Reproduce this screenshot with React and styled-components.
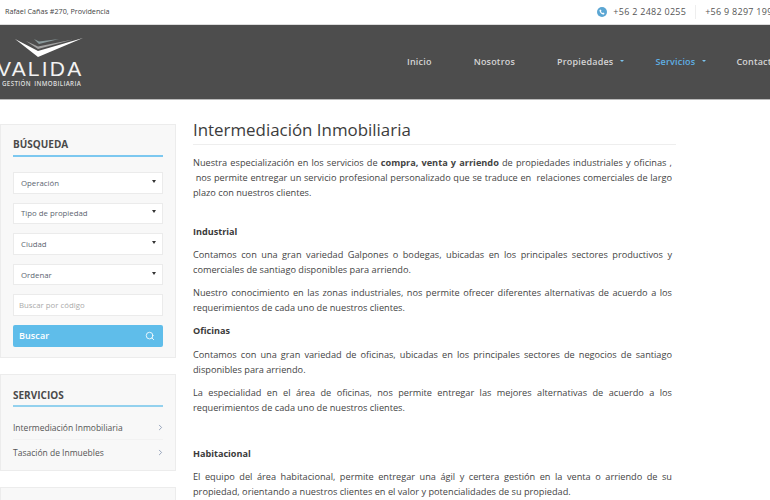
import React from "react";
import styled, { createGlobalStyle } from "styled-components";
import { Search, ChevronRight } from "lucide-react";

const Global = createGlobalStyle`
  html, body { margin: 0; padding: 0; background: #fff; overflow: hidden; height: 500px; }
  body { font-family: "Open Sans", "Liberation Sans", sans-serif; color: #444; }
  * { box-sizing: border-box; }
`;
const Page = styled.div`width: 770px; height: 500px; overflow: hidden;`;
const TopBar = styled.div`
  height: 24px; display: flex; align-items: center;
  white-space: nowrap; color: #444; padding-left: 5px;
`;
const Address = styled.span`font-size: 7.2px; margin-top: -2px;`;
const Phones = styled.div`display: flex; align-items: center; margin-left: auto; margin-right: -8px; font-size: 9px; letter-spacing: .27px; color: #555;`;
const PhoneDot = styled.span`
  width: 10px; height: 10px; border-radius: 50%; background: #5ba6d3; margin-right: 6px; display: flex; align-items: center; justify-content: center;
`;
const Phone = styled.span`
  padding-right: ${p => (p.$first ? "9px" : "0")};
  margin-right: ${p => (p.$first ? "9px" : "0")};
  border-right: ${p => (p.$first ? "1px solid #eee" : "none")};
  line-height: 14px;
`;
const Header = styled.header`
  height: 76px; background: #4d4d4d; border-top: 1px solid #ddd; border-bottom: 1px solid #bbb;
  display: flex; align-items: center; overflow: hidden; white-space: nowrap;
`;
const Logo = styled.div`
  width: 84px; margin-left: -2px; display: flex; flex-direction: column; align-items: flex-start; color: #fff; flex: none;
`;
const LogoMark = styled.svg`width: 71px; height: 21px; margin-left: 15px; margin-bottom: 2px; display: block;`;
const LogoName = styled.div`font-family: "Liberation Sans", sans-serif; font-size: 21px; line-height: 19px; letter-spacing: 2.2px; margin-left: -1px; font-weight: 400; color: #f2f2f2;`;
const LogoSub = styled.div`font-size: 6.2px; line-height: 9px; letter-spacing: .35px; margin-left: 4px; margin-top: 1px; font-weight: 600; color: #ddd; word-spacing: 1.5px;`;
const Nav = styled.nav`display: flex; align-items: center; margin-left: 325px; margin-top: -2px; font-size: 9px; font-weight: 600; color: #d4d4d4; letter-spacing: .2px;`;
const NavItem = styled.span`
  display: flex; align-items: center; margin-left: ${p => p.$gap}px; color: ${p => (p.$active ? "#5fb0e4" : "#d4d4d4")};
`;
const Caret = styled.i`
  display: inline-block; margin-left: 7px; width: 0; height: 0; border-left: 2px solid transparent; border-right: 2px solid transparent; border-top: 2px solid #7cc4ee;
`;
const Body = styled.div`display: flex; align-items: flex-start; padding-top: 24px;`;
const Sidebar = styled.aside`width: 176px; flex: none; display: flex; flex-direction: column; gap: 16px;`;
const Panel = styled.section`
  background: #f8f8f8; border: 1px solid #ececec; padding: 12px 12px 0; height: ${p => p.$h}px; width: 176px;
`;
const PanelTitle = styled.h3`
  margin: ${p => (p.$thick ? "1px" : "0")} 0 0; font-size: 10px; line-height: 14px; font-weight: 700; color: #4a4a4a; padding-bottom: ${p => (p.$thick ? "3px" : "4px")};
  border-bottom: 2px solid ${p => (p.$thick ? "#93d1ee" : "#7cc8f0")};
`;
const Fields = styled.div`display: flex; flex-direction: column; gap: 9px; margin-top: 15px;`;
const Field = styled.div`
  height: 21.6px; background: #fff; border: 1px solid #ebebeb; display: flex; align-items: center; justify-content: space-between;
  padding: 0 6px 0 ${p => (p.$placeholder ? "5px" : "7px")}; font-size: 7.8px; color: ${p => (p.$placeholder ? "#aaa" : "#5c6470")};
`;
const FieldCaret = styled.i`
  width: 0; height: 0; border-left: 2.5px solid transparent; border-right: 2.5px solid transparent; border-top: 3px solid #333; margin-top: -3px;
`;
const SearchBtn = styled.div`
  height: 22px; border-radius: 2px; background: #5fbdea; color: #fff; display: flex; align-items: center; justify-content: space-between;
  padding: 0 8px 0 6px; font-size: 9px; font-weight: 600; letter-spacing: .1px;
`;
const ServiceList = styled.ul`list-style: none; margin: 8px 0 0; padding: 0;`;
const ServiceItem = styled.li`
  height: 25px; display: flex; align-items: center; justify-content: space-between; font-size: 8.5px; color: #555;
  border-bottom: ${p => (p.$last ? "none" : "1px solid #f2f2f2")};
  svg { margin-right: -2px; }
`;
const Main = styled.main`width: 483px; margin-left: 17px; margin-top: -4px; flex: none; color: #444;`;
const Title = styled.h1`
  margin: 0; font-size: 16.9px; line-height: 20px; font-weight: 400; color: #3c3c3c; padding: 0 0 4px 0; border-bottom: 1px solid #eee;
`;
const Para = styled.p`
  margin: ${p => p.$top ?? 0}px 0 0; width: 479px; text-align: justify; font-size: 9.2px; line-height: 15px;
`;
const Line = styled.span`display: block; text-align: justify; text-align-last: ${p => (p.$end ? "left" : "justify")};`;
const Sub = styled.h4`margin: ${p => p.$top}px 0 0; font-size: 9.1px; line-height: 15px; font-weight: 700; color: #3a3a3a;`;

export default function App() {
  return (
    <Page>
      <Global />
      <TopBar>
        <Address>Rafael Cañas #270, Providencia</Address>
        <Phones>
          <PhoneDot>
            <svg width="6" height="6" viewBox="0 0 24 24" fill="#fff"><path d="M6 2l4 5-2 3c1 3 3 5 6 6l3-2 5 4-2 4c-9 1-19-9-18-18z" /></svg>
          </PhoneDot>
          <Phone $first>+56 2 2482 0255</Phone>
          <Phone>+56 9 8297 1999</Phone>
        </Phones>
      </TopBar>
      <Header>
        <Logo>
          <LogoMark viewBox="0 0 71 21">
            <path d="M2 3 L25 21 L70 2 L25 15 Z" fill="#fff" />
            <path d="M13 5 L25 13 L60 3.5 L25 10.5 Z" fill="#a4a4a4" />
            <path d="M21 3 L26 8 L46 3 L26 5.5 Z" fill="#8a9a9c" />
          </LogoMark>
          <LogoName>VALIDA</LogoName>
          <LogoSub>GESTIÓN INMOBILIARIA</LogoSub>
        </Logo>
        <Nav>
          <NavItem $gap={0}>Inicio</NavItem>
          <NavItem $gap={42}>Nosotros</NavItem>
          <NavItem $gap={42}>Propiedades<Caret /></NavItem>
          <NavItem $gap={31} $active>Servicios<Caret /></NavItem>
          <NavItem $gap={30}>Contacto</NavItem>
        </Nav>
      </Header>
      <Body>
        <Sidebar>
          <Panel $h={234}>
            <PanelTitle>BÚSQUEDA</PanelTitle>
            <Fields>
              <Field>Operación<FieldCaret /></Field>
              <Field>Tipo de propiedad<FieldCaret /></Field>
              <Field>Ciudad<FieldCaret /></Field>
              <Field>Ordenar<FieldCaret /></Field>
              <Field $placeholder>Buscar por código</Field>
              <SearchBtn>Buscar<Search size={10} strokeWidth={2} /></SearchBtn>
            </Fields>
          </Panel>
          <Panel $h={97}>
            <PanelTitle $thick>SERVICIOS</PanelTitle>
            <ServiceList>
              <ServiceItem>Intermediación Inmobiliaria<ChevronRight size={9} color="#7a8aa8" /></ServiceItem>
              <ServiceItem $last>Tasación de Inmuebles<ChevronRight size={9} color="#7a8aa8" /></ServiceItem>
            </ServiceList>
          </Panel>
          <Panel $h={40} />
        </Sidebar>
        <Main>
          <Title>Intermediación Inmobiliaria</Title>
          <Para $top={10}>
            <Line>Nuestra especialización en los servicios de <b>compra, venta y arriendo</b> de propiedades industriales y oficinas ,</Line>
            <Line>&nbsp;nos permite entregar un servicio profesional personalizado que se traduce en &nbsp;relaciones comerciales de largo</Line>
            <Line $end>plazo con nuestros clientes.</Line>
          </Para>
          <Sub $top={24}>Industrial</Sub>
          <Para $top={8}>
            <Line>Contamos con una gran variedad Galpones o bodegas, ubicadas en los principales sectores productivos y</Line>
            <Line $end>comerciales de santiago disponibles para arriendo.</Line>
          </Para>
          <Para $top={8}>
            <Line>Nuestro conocimiento en las zonas industriales, nos permite ofrecer diferentes alternativas de acuerdo a los</Line>
            <Line $end>requerimientos de cada uno de nuestros clientes.</Line>
          </Para>
          <Sub $top={8}>Oficinas</Sub>
          <Para $top={9}>
            <Line>Contamos con una gran variedad de oficinas, ubicadas en los principales sectores de negocios de santiago</Line>
            <Line $end>disponibles para arriendo.</Line>
          </Para>
          <Para $top={8}>
            <Line>La especialidad en el área de oficinas, nos permite entregar las mejores alternativas de acuerdo a los</Line>
            <Line $end>requerimientos de cada uno de nuestros clientes.</Line>
          </Para>
          <Sub $top={31}>Habitacional</Sub>
          <Para $top={8}>
            <Line>El equipo del área habitacional, permite entregar una ágil y certera gestión en la venta o arriendo de su</Line>
            <Line $end>propiedad, orientando a nuestros clientes en el valor y potencialidades de su propiedad.</Line>
          </Para>
        </Main>
      </Body>
    </Page>
  );
}
